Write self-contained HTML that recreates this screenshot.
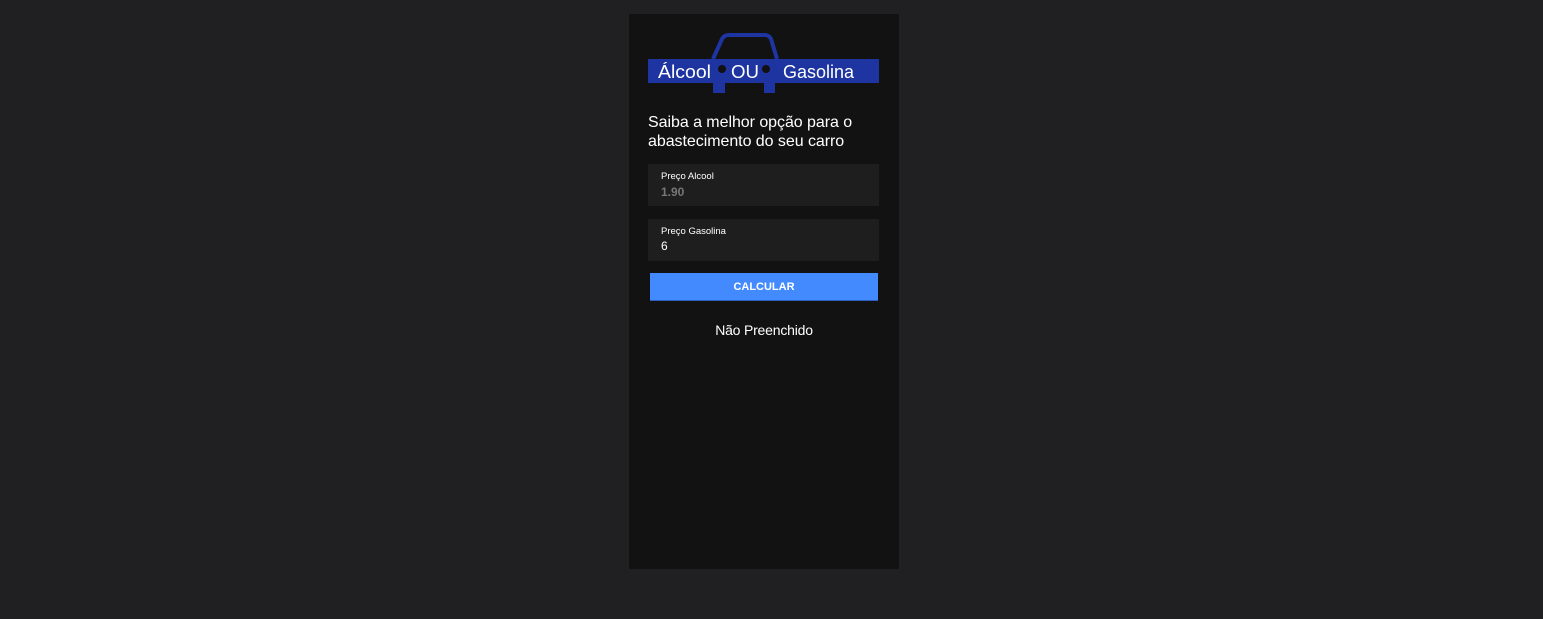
<!DOCTYPE html>
<html><head><meta charset="utf-8"><style>
*{margin:0;padding:0;box-sizing:border-box}
body{width:1543px;height:619px;background:#202022;font-family:"Liberation Sans",sans-serif;position:relative;overflow:hidden}
.panel{position:absolute;left:629px;top:14px;width:270px;height:555px;background:#121212}
.abs{position:absolute}
.f{position:absolute;left:648px;width:231px;height:42px;background:#1e1e1e}
.f .l{position:absolute;left:13px;top:7px;font-size:9.5px;color:#fff}
.f .v{position:absolute;left:13px;top:21px;font-size:12px;font-weight:bold}
</style></head><body>
<div class="panel"></div>
<svg class="abs" style="left:0;top:0" width="1543" height="619">
<path d="M713 59 L722 39 Q724 35 729 35 L765 35 Q769 35 771 39 L777 59" fill="none" stroke="#1e34a0" stroke-width="4"/>
<rect x="648" y="59" width="231" height="24" fill="#1e34a0"/>
<rect x="713" y="83" width="12" height="10" fill="#1e34a0"/>
<rect x="764" y="83" width="11" height="10" fill="#1e34a0"/>
<circle cx="722" cy="69" r="4" fill="#111"/>
<circle cx="766" cy="69" r="4" fill="#111"/>
<text x="658" y="78" font-family="Liberation Sans" font-size="18" fill="#fff" textLength="53" lengthAdjust="spacingAndGlyphs">Álcool</text>
<text x="731" y="78" font-family="Liberation Sans" font-size="18" fill="#fff" textLength="28" lengthAdjust="spacingAndGlyphs">OU</text>
<text x="783" y="78" font-family="Liberation Sans" font-size="18" fill="#fff" textLength="71" lengthAdjust="spacingAndGlyphs">Gasolina</text>
</svg>
<div class="abs" style="left:648px;top:113px;font-size:16px;line-height:19px;color:#fff;letter-spacing:-0.05px">Saiba a melhor opção para o<br>abastecimento do seu carro</div>
<div class="f" style="top:164px"><div class="l">Preço Alcool</div><div class="v" style="color:#777">1.90</div></div>
<div class="f" style="top:219px"><div class="l">Preço Gasolina</div><div class="v" style="color:#fff;font-weight:normal;top:20px">6</div></div>
<div class="abs" style="left:650px;top:273px;width:228px;height:28px;background:#448aff;border-bottom:1px solid #2a5fc0;color:#fff;font-size:11px;font-weight:bold;text-align:center;line-height:28px">CALCULAR</div>
<div class="abs" style="left:629px;width:270px;top:322px;text-align:center;font-size:14px;color:#fff;letter-spacing:-0.2px">Não Preenchido</div>
</body></html>
